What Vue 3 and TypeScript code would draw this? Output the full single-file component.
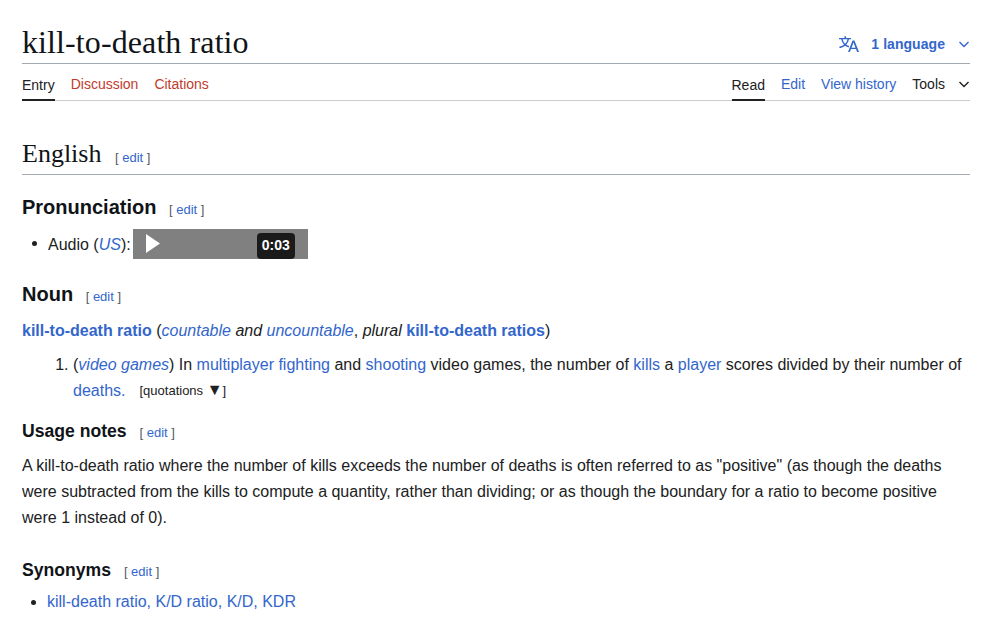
<template>
  <div class="page">
    <header class="title-row">
      <h1>kill-to-death ratio</h1>
      <div class="lang">
        <svg class="lang-icon" width="20" height="20" viewBox="0 0 20 20"><path d="M20 18h-1.44a.6.6 0 0 1-.4-.12.8.8 0 0 1-.23-.31L17 15h-5l-1 2.54a.8.8 0 0 1-.22.3.6.6 0 0 1-.4.14H9l4.55-11.47h1.89zm-3.53-4.31L14.89 9.5a12 12 0 0 1-.39-1.24q-.09.37-.19.69l-.19.56-1.58 4.19zm-6.3-1.58a13.4 13.4 0 0 1-2.91-1.41 11.46 11.46 0 0 0 2.81-5.37H12V4H7.31a4 4 0 0 0-.2-.56C6.87 2.79 6.6 2 6.6 2l-1.47.5s.4.89.6 1.5H0v1.33h2.15A11.23 11.23 0 0 0 5 10.7a17.2 17.2 0 0 1-5 2.1q.56.82.87 1.38a23.3 23.3 0 0 0 5.22-2.51 15.6 15.6 0 0 0 3.56 1.77zM3.63 5.33h4.91a8.1 8.1 0 0 1-2.45 4.45 9.1 9.1 0 0 1-2.46-4.45"/></svg>
        <span class="lang-label">1 language</span>
        <svg class="chev" width="12" height="12" viewBox="0 0 12 12"><path d="M1.5 4 6 8.5 10.500 4" /></svg>
      </div>
    </header>

    <nav class="tabs">
      <div class="tab-group">
        <a class="tab active">Entry</a>
        <a class="tab red">Discussion</a>
        <a class="tab red">Citations</a>
      </div>
      <div class="tab-group">
        <a class="tab active">Read</a>
        <a class="tab">Edit</a>
        <a class="tab">View history</a>
        <a class="tab dark">Tools
          <svg class="chev tools-chev" width="12" height="12" viewBox="0 0 12 12"><path d="M1.5 4 6 8.5 10.500 4" /></svg>
        </a>
      </div>
    </nav>

    <main class="content">
      <h2>English <span class="edit">[ <a>edit</a> ]</span></h2>

      <h3 class="pron">Pronunciation <span class="edit">[ <a>edit</a> ]</span></h3>
      <ul class="audio-list">
        <li>
          <span class="audio-label">Audio (<a><i>US</i></a>):</span>
          <span class="player">
            <svg class="play" width="14" height="19" viewBox="0 0 14 19"><path d="M0 0 14 9.500 0 19z" fill="#fff" /></svg>
            <span class="time">0:03</span>
          </span>
        </li>
      </ul>

      <h3 class="noun">Noun <span class="edit">[ <a>edit</a> ]</span></h3>
      <p class="headword">
        <a><b>kill-to-death ratio</b></a> (<a><i>countable</i></a> <i>and</i> <a><i>uncountable</i></a>, <i>plural</i> <a><b>kill-to-death ratios</b></a>)
      </p>
      <ol class="defs">
        <li>
          (<a><i>video games</i></a>) In <a>multiplayer</a> <a>fighting</a> and <a>shooting</a> video games, the number of <a>kills</a> a <a>player</a> scores divided by their number of <a>deaths.</a>
          <span class="quotes">[quotations <span class="tri">▼</span>]</span>
        </li>
      </ol>

      <h4 class="usage">Usage notes <span class="edit">[ <a>edit</a> ]</span></h4>
      <p class="notes">A kill-to-death ratio where the number of kills exceeds the number of deaths is often referred to as "positive" (as though the deaths were subtracted from the kills to compute a quantity, rather than dividing; or as though the boundary for a ratio to become positive were 1 instead of 0).</p>

      <h4 class="syn">Synonyms <span class="edit">[ <a>edit</a> ]</span></h4>
      <ul class="syn-list">
        <li><a>kill-death ratio, K/D ratio, K/D, KDR</a></li>
      </ul>
    </main>
  </div>
</template>

<script setup lang="ts">
</script>

<style>
html, body { background: #fff; overflow: hidden; }
</style>

<style scoped>
.page {
  width: 948px;
  height: 626px;
  margin-left: 22px;
  overflow: hidden;
  font-family: "Liberation Sans", Arial, sans-serif;
  font-size: 16px;
  line-height: 26px;
  color: #202122;
}
a { color: #3366cc; }

.title-row {
  display: flex;
  align-items: flex-end;
  justify-content: space-between;
  height: 63px;
  border-bottom: 1px solid #a2a9b1;
}
h1 {
  margin: 0 0 3px;
  font-family: "Liberation Serif", serif;
  font-size: 32px;
  font-weight: 400;
  line-height: 36px;
  letter-spacing: .1px;
  color: #101418;
}
.lang { display: flex; align-items: center; margin-bottom: 9px; height: 20px; }
.lang-icon { fill: #3366cc; margin-right: 12px; }
.lang-label { font-size: 14px; font-weight: 700; color: #3366cc; line-height: 20px; letter-spacing: .05px; }
.chev { fill: none; stroke: #3366cc; stroke-width: 1.4; margin-left: 13px; }

.tabs {
  display: flex;
  justify-content: space-between;
  height: 36px;
  border-bottom: 1px solid #c8ccd1;
  font-size: 14px;
}
.tab-group { display: flex; gap: 16px; }
.tab { display: flex; align-items: center; height: 36px; padding-top: 4px; box-sizing: border-box; color: #3366cc; line-height: 20px; }
.tab.active { color: #202122; border-bottom: 2px solid #202122; padding-top: 6px; height: 37px; }
.tab.red { color: #bf3c2c; }
.tab.dark { color: #202122; }
.tools-chev { stroke: #202122; margin-left: 13px; }

.content { padding-top: 36px; }
h2 {
  margin: 0;
  height: 37px;
  font-family: "Liberation Serif", serif;
  font-size: 26px;
  font-weight: 400;
  line-height: 34px;
  color: #101418;
  border-bottom: 1px solid #a2a9b1;
}
h3 { margin: 0; font-size: 20px; font-weight: 700; line-height: 26px; color: #101418; }
h4 { margin: 0; font-size: 17.6px; font-weight: 700; line-height: 26px; color: #101418; }
.edit {
  margin-left: 7px;
  font-family: "Liberation Sans", Arial, sans-serif;
  font-size: 13px;
  font-weight: 400;
  color: #54595d;
}
h4 .edit { margin-left: 8px; }
.pron { margin-top: 19px; }
.audio-list, .syn-list { margin: 0; padding-left: 26px; }
.audio-list { margin-top: 6px; }
.audio-list li { height: 30px; }
.audio-label { display: inline-block; padding-top: 2px; vertical-align: middle; }
.player {
  display: inline-flex;
  align-items: flex-end;
  justify-content: space-between;
  box-sizing: border-box;
  width: 175px;
  height: 30px;
  padding: 0 13px;
  background: #808080;
  vertical-align: middle;
  margin-left: 2px;
}
.play { align-self: center; margin-top: -1px; }
.time {
  display: block;
  width: 38px;
  height: 26px;
  background: #1a1a1a;
  border-radius: 4px;
  color: #fff;
  font-size: 14px;
  font-weight: 700;
  line-height: 24px;
  text-align: center;
}
.noun { margin-top: 22px; }
.headword { margin: 8px 0 0; }
.defs { margin: 8px 0 0; padding-left: 51px; }
.quotes { margin-left: 14px; font-size: 13px; color: #202122; vertical-align: 1px; }
.tri { font-size: 16px; line-height: 0; }
.usage { margin-top: 14px; }
.notes { margin: 7px 0 0; }
.syn { margin-top: 26px; }
.syn-list { margin-top: 4px; padding-left: 25px; }
</style>
